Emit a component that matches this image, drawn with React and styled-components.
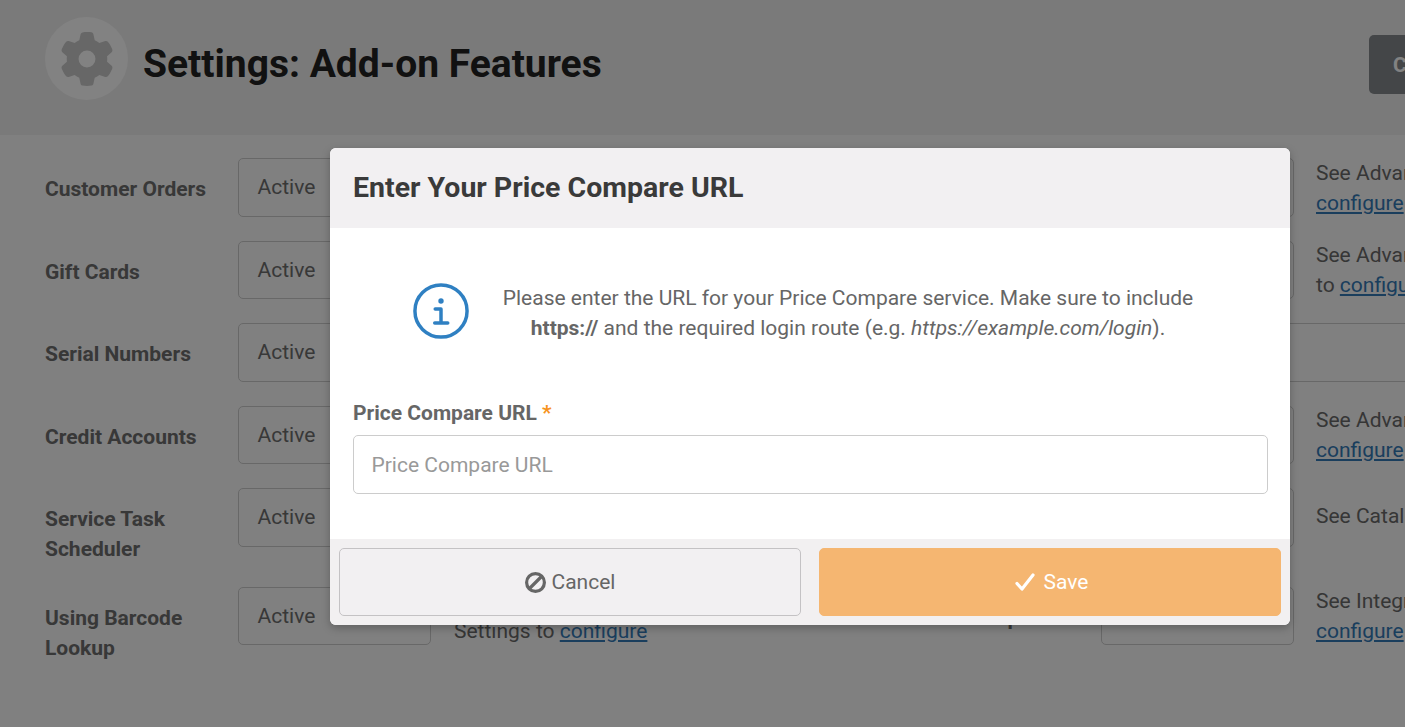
import React from "react";
import styled, { createGlobalStyle } from "styled-components";
import { FaGear } from "react-icons/fa6";

const Global = createGlobalStyle`
  html, body { margin: 0; padding: 0; overflow: hidden; height: 100%; }
  body { font-family: Roboto, "Liberation Sans", sans-serif; font-size: 21px; color: #6e6e6e; background: #fbfbfb; }
  * { box-sizing: border-box; }
`;

const Page = styled.div`
  position: relative;
  width: 1620px;
  height: 727px;
  background: #fbfbfb;
`;

const Header = styled.header`
  height: 135px;
  padding: 17px 45px 0;
  background: #f0f0f0;
  display: flex;
  align-items: flex-start;
  justify-content: space-between;
`;

const TitleGroup = styled.div`
  display: flex;
  align-items: center;
  gap: 15px;
`;

const IconCircle = styled.div`
  width: 83px;
  height: 83px;
  border-radius: 50%;
  background: #fff;
  color: #cacaca;
  display: flex;
  align-items: center;
  justify-content: center;
`;

const PageTitle = styled.h1`
  margin: 11px 0 0;
  font-size: 39px;
  line-height: 46px;
  font-weight: 700;
  color: #222;
`;

const HeaderButton = styled.button`
  width: 206px;
  height: 59px;
  margin-top: 18px;
  padding: 0 0 0 24px;
  border: 0;
  border-radius: 5px;
  background: #85898d;
  color: #fff;
  font: 700 21px Roboto, sans-serif;
  text-align: left;
`;

const Rows = styled.main`
  padding: 23px 45px 0;
`;

const Row = styled.div`
  display: grid;
  grid-template-columns: 193px 193px 477px 193px 193px 1fr;
  min-height: 60px;
  margin-bottom: 22.5px;
  align-items: start;
`;

const RowLabel = styled.div`
  padding: 16px 20px 0 0;
  font-weight: 700;
  line-height: 30px;
  color: #6e6e6e;
`;

const Select = styled.div`
  height: 58.5px;
  border: 1px solid #ccc;
  border-radius: 5px;
  padding: 1px 18.5px 0;
  display: flex;
  align-items: center;
  line-height: 1;
  color: #6e6e6e;
  ${(p) => p.$wide && "grid-column: 5 / 7;"}
`;

const Description = styled.div`
  margin-top: -0.5px;
  line-height: 30px;
  padding-left: ${(p) => (p.$right ? "22px" : "23px")};
  padding-top: ${(p) => (p.$single ? "13px" : "0")};
  white-space: nowrap;
  color: #6a6a6a;
  a {
    color: #337ab7;
    text-decoration: underline;
  }
`;

const Overlay = styled.div`
  position: absolute;
  inset: 0;
  background: rgba(0, 0, 0, 0.49);
  display: flex;
  justify-content: center;
  align-items: flex-start;
  padding-top: 148px;
`;

const Modal = styled.div`
  width: 960px;
  height: 477px;
  background: #fff;
  border-radius: 6px;
  overflow: hidden;
  box-shadow: 0 3px 9px rgba(0, 0, 0, 0.25);
  display: flex;
  flex-direction: column;
`;

const ModalHeader = styled.div`
  height: 80px;
  flex: none;
  background: #f2f0f2;
  padding: 0 23px 2px;
  display: flex;
  align-items: center;
`;

const ModalTitle = styled.h2`
  margin: 0;
  font-size: 28.5px;
  font-weight: 700;
  color: #3a3a3a;
`;

const ModalBody = styled.div`
  flex: 1;
  padding: 55px 22px 0 23px;
  color: #666;
`;

const Notice = styled.div`
  display: flex;
  align-items: flex-start;
  padding-left: 60px;
  gap: 29px;
`;

const NoticeIcon = styled.svg`
  flex: none;
  width: 56px;
  height: 56px;
  color: #2f80c2;
`;

const NoticeText = styled.p`
  margin: 0;
  width: 700px;
  line-height: 30px;
  text-align: center;
  color: #666;
  b { font-weight: 700; }
`;

const FieldLabel = styled.label`
  display: block;
  margin-top: 55px;
  line-height: 30px;
  font-weight: 700;
  color: #666;
`;

const Required = styled.span`
  color: #f7931e;
`;

const Input = styled.input`
  display: block;
  width: 915px;
  height: 59px;
  margin-top: 7px;
  padding: 0 17.5px;
  border: 1px solid #ccc;
  border-radius: 5px;
  font: 400 21px Roboto, sans-serif;
  color: #666;
  outline: none;
  &::placeholder { color: #999; opacity: 1; }
`;

const ModalFooter = styled.div`
  height: 86px;
  flex: none;
  background: #f2f0f1;
  padding: 9px;
  display: grid;
  grid-template-columns: 1fr 1fr;
  gap: 18px;
`;

const FooterButton = styled.button`
  height: 68px;
  padding: 0 0 0 ${(p) => (p.$primary ? "3px" : "0")};
  border-radius: 5px;
  border: 1px solid ${(p) => (p.$primary ? "#f5b671" : "#c4c2c4")};
  background: ${(p) => (p.$primary ? "#f5b671" : "#f2f0f2")};
  color: ${(p) => (p.$primary ? "#fff" : "#666")};
  font: 400 21px Roboto, sans-serif;
  display: flex;
  align-items: center;
  justify-content: center;
  gap: ${(p) => (p.$primary ? "9px" : "6px")};
  svg { flex: none; }
`;

const rows = [
  { l: "Customer Orders", d: <>See Customer Settings to<br />configure</>, r: <>See Advanced Settings to<br /><a>configure</a></>, rl: "Price Compare" },
  { l: "Gift Cards", d: <>See Catalog Settings<br />to configure</>, r: <>See Advanced Settings<br />to <a>configure</a></>, rl: "Punch Cards" },
  { l: "Serial Numbers", d: null, wide: true, rl: "Store Credit" },
  { l: "Credit Accounts", d: <>See Advanced Settings to<br />configure</>, r: <>See Advanced Settings to<br /><a>configure</a></>, rl: "Layaways" },
  { l: "Service Task Scheduler", d: <>See Catalog Settings</>, r: <>See Catalog Settings</>, single: true, rl: "Matrix Items" },
  { l: "Using Barcode Lookup", d: <>See Integrations<br />Settings to <a>configure</a></>, r: <>See Integrations Settings to<br /><a>configure</a></>, rl: "Price Group" },
];

export default function App() {
  return (
    <>
      <Global />
      <Page>
        <Header>
          <TitleGroup>
            <IconCircle><FaGear size={54} /></IconCircle>
            <PageTitle>Settings: Add-on Features</PageTitle>
          </TitleGroup>
          <HeaderButton>Close Settings</HeaderButton>
        </Header>
        <Rows>
          {rows.map((row) => (
            <Row key={row.l}>
              <RowLabel>{row.l}</RowLabel>
              <Select>Active</Select>
              <Description $single={row.single}>{row.d}</Description>
              <RowLabel>{row.rl}</RowLabel>
              <Select $wide={row.wide}>Active</Select>
              {!row.wide && <Description $right $single={row.single}>{row.r}</Description>}
            </Row>
          ))}
        </Rows>
        <Overlay>
          <Modal>
            <ModalHeader>
              <ModalTitle>Enter Your Price Compare URL</ModalTitle>
            </ModalHeader>
            <ModalBody>
              <Notice>
                <NoticeIcon viewBox="0 0 58 58" fill="none" stroke="currentColor">
                  <circle cx="29" cy="29" r="27" strokeWidth="3.6" />
                  <circle cx="29" cy="18.6" r="2.8" fill="currentColor" stroke="none" />
                  <path d="M23 27H29V41M22.5 41.5H36" strokeWidth="3.6" strokeLinecap="round" strokeLinejoin="round" />
                </NoticeIcon>
                <NoticeText>
                  Please enter the URL for your Price Compare service. Make sure to include <b>https://</b> and the required login route (e.g. <i>https://example.com/login</i>).
                </NoticeText>
              </Notice>
              <FieldLabel>Price Compare URL <Required>*</Required></FieldLabel>
              <Input placeholder="Price Compare URL" />
            </ModalBody>
            <ModalFooter>
              <FooterButton>
                <svg width="21" height="21" viewBox="0 0 21 21" fill="none" stroke="currentColor" strokeWidth="3.2">
                  <circle cx="10.5" cy="10.5" r="8.9" />
                  <path d="M16.5 4.5L4.5 16.5" />
                </svg>
                Cancel
              </FooterButton>
              <FooterButton $primary>
                <svg width="20" height="18" viewBox="0 0 20 18" fill="none" stroke="currentColor" strokeWidth="3.2" strokeLinecap="round" strokeLinejoin="round">
                  <path d="M2 10.5L7 16L18 2" />
                </svg>
                Save
              </FooterButton>
            </ModalFooter>
          </Modal>
        </Overlay>
      </Page>
    </>
  );
}
